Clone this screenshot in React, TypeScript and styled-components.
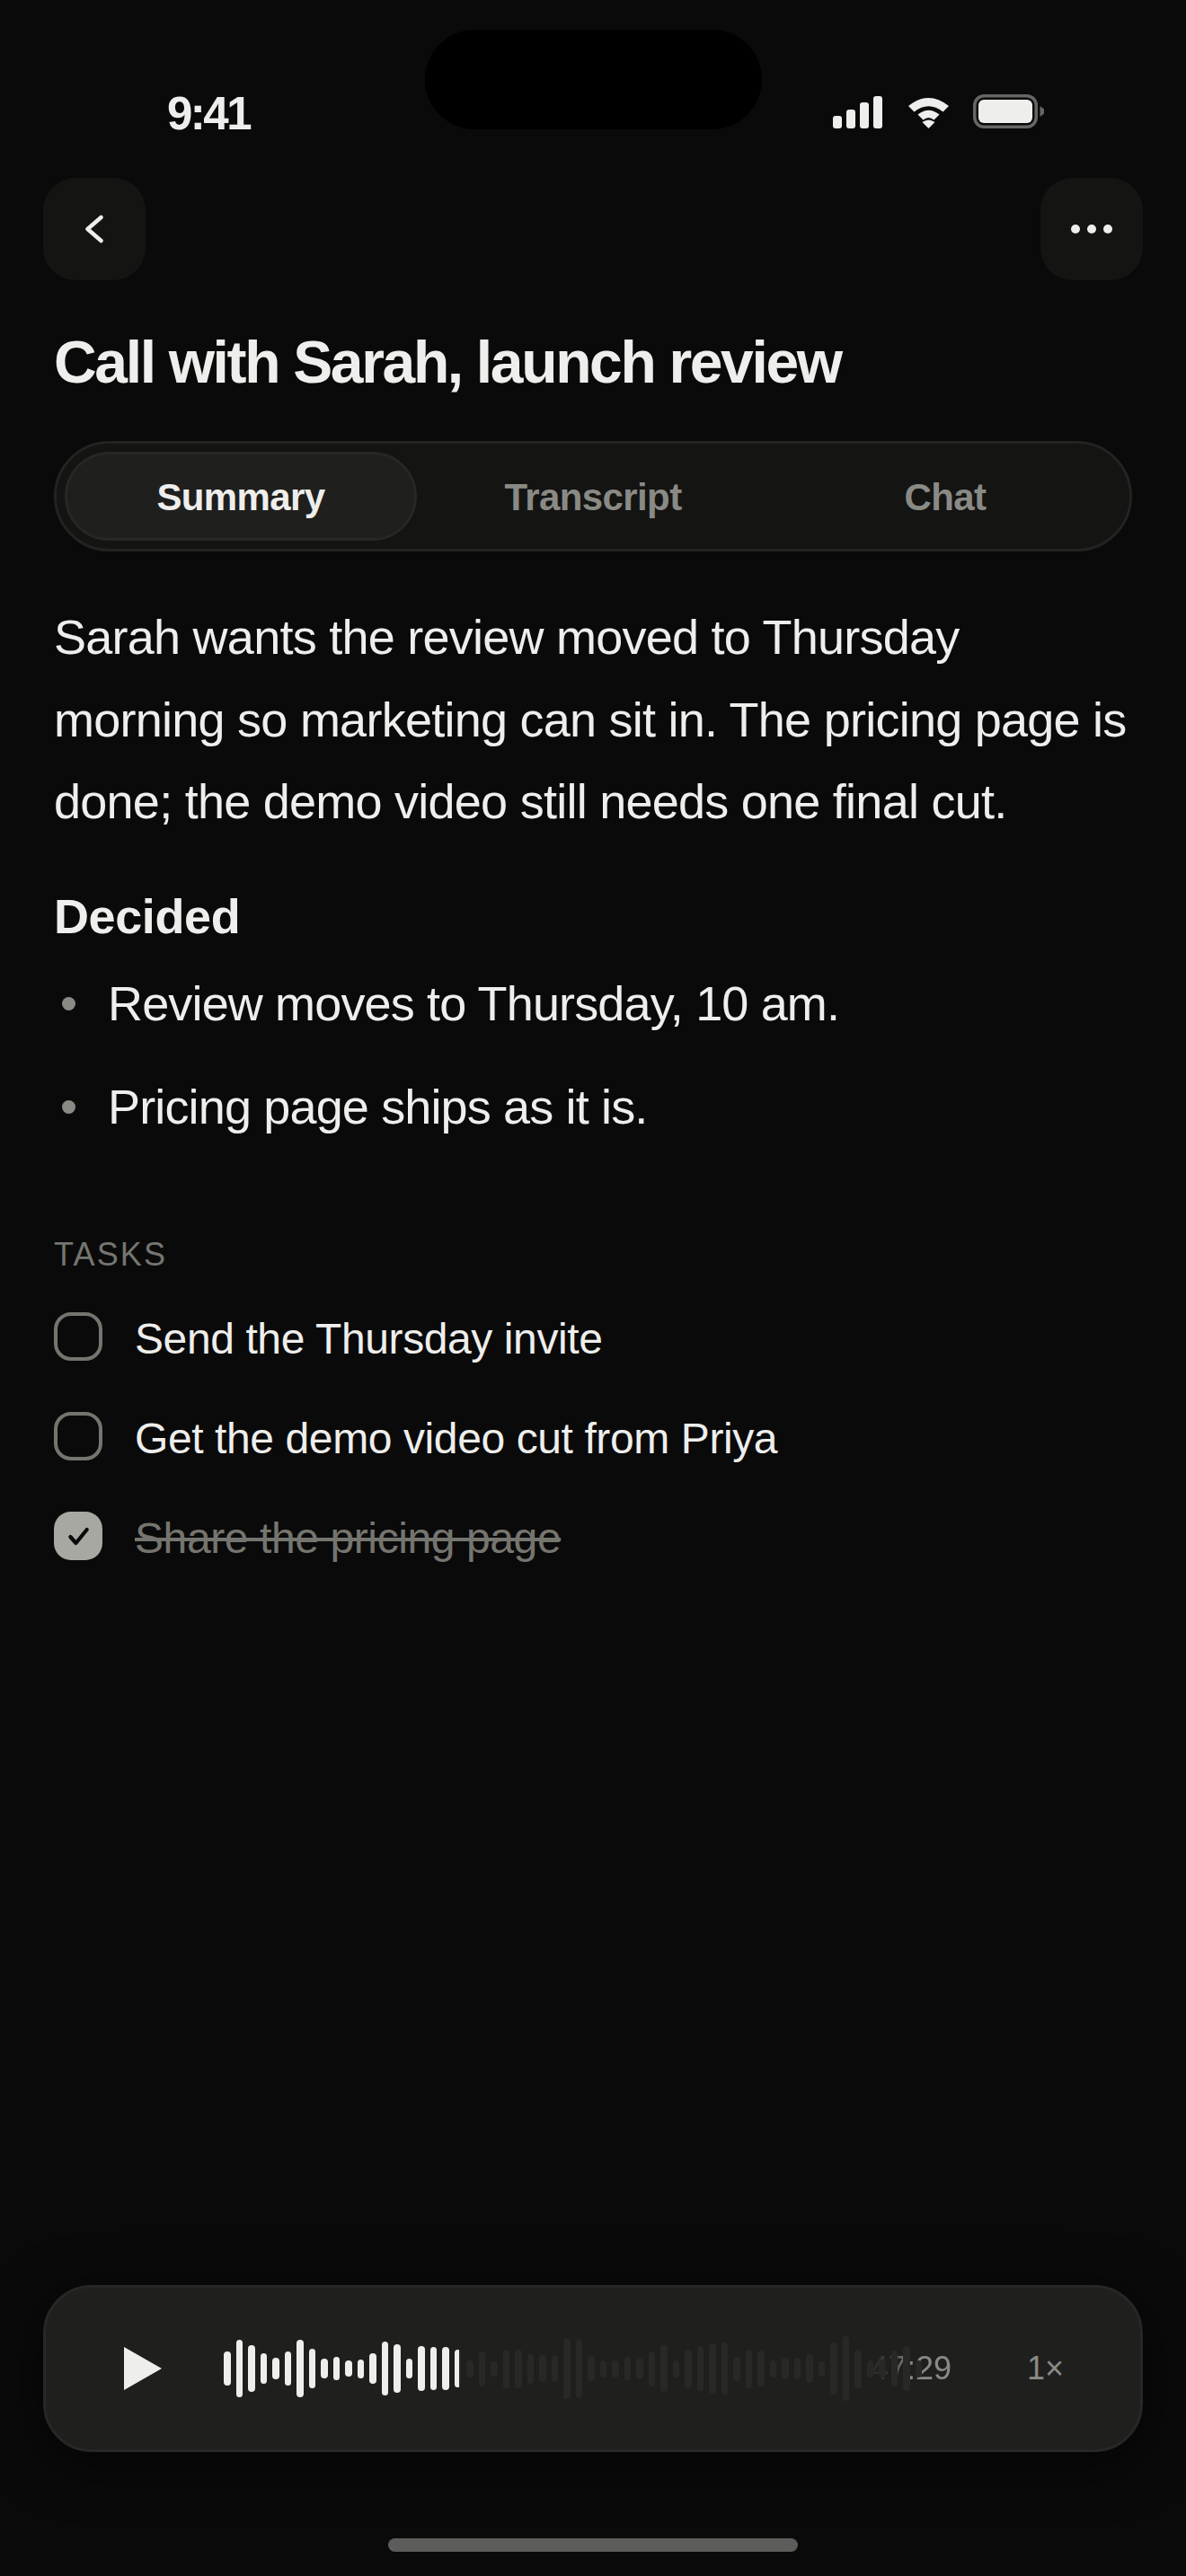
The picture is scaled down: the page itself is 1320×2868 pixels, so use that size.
import styled, { createGlobalStyle } from "styled-components";

const GlobalStyle = createGlobalStyle`
  html, body {
    margin: 0;
    background: #0a0a0a;
  }
  * {
    box-sizing: border-box;
  }
`;

const tabs = ["Summary", "Transcript", "Chat"];
const decisions = ["Review moves to Thursday, 10 am.", "Pricing page ships as it is."];
const tasks = [
  { label: "Send the Thursday invite", done: false },
  { label: "Get the demo video cut from Priya", done: false },
  { label: "Share the pricing page", done: true },
];
const bars = [
  38, 64, 52, 34, 24, 38, 64, 44, 22, 26, 18, 21, 34, 60, 54, 22, 50, 48, 48, 42, 19, 39, 17, 43, 43, 33, 30, 30, 68, 66,
  28, 19, 19, 27, 23, 39, 52, 19, 43, 50, 56, 58, 27, 43, 40, 19, 24, 24, 32, 17, 58, 72, 43, 19, 20, 40, 50, 19,
];

const App = () => {
  return (
    <Page>
      <GlobalStyle />
      <StatusBar>
        <Clock>9:41</Clock>
        <Island />
        <StatusIcons>
          <svg width="55" height="36" viewBox="0 0 55 36">
            <rect x="0" y="22" width="10" height="14" rx="3" fill="#eeeeec" />
            <rect x="15" y="15" width="10" height="21" rx="3" fill="#eeeeec" />
            <rect x="30" y="7" width="10" height="29" rx="3" fill="#eeeeec" />
            <rect x="45" y="0" width="10" height="36" rx="3" fill="#eeeeec" />
          </svg>
          <svg width="45" height="34" viewBox="0 0 45 34">
            <path d="M0 9 Q22.5 -9 45 9 L38.5 15.5 Q22.5 3 6.5 15.5 Z" fill="#eeeeec" />
            <path d="M10.5 18.5 Q22.5 9 34.5 18.5 L28.5 24.5 Q22.5 19.5 16.5 24.5 Z" fill="#eeeeec" />
            <path d="M15.5 27 Q22.5 22 29.5 27 L22.5 34 Z" fill="#eeeeec" />
          </svg>
          <svg width="79" height="38" viewBox="0 0 79 38">
            <rect x="1.75" y="1.75" width="68.5" height="34.5" rx="10.5" fill="none" stroke="#666664" strokeWidth="3.5" />
            <rect x="6" y="6" width="60" height="26" rx="6" fill="#eeeeec" />
            <path d="M74.5 13 L79 16.5 V21.5 L74.5 25 Z" fill="#666664" />
          </svg>
        </StatusIcons>
      </StatusBar>

      <NavRow>
        <IconButton aria-label="Back">
          <svg width="24" height="36" viewBox="0 0 24 36">
            <path d="M19.5 5 L4.5 18 L19.5 31" fill="none" stroke="#eeeeec" strokeWidth="4.5" strokeLinecap="round" strokeLinejoin="round" />
          </svg>
        </IconButton>
        <IconButton aria-label="More">
          <svg width="46" height="10" viewBox="0 0 46 10">
            <circle cx="5" cy="5" r="5" fill="#eeeeec" />
            <circle cx="23" cy="5" r="5" fill="#eeeeec" />
            <circle cx="41" cy="5" r="5" fill="#eeeeec" />
          </svg>
        </IconButton>
      </NavRow>

      <Title>Call with Sarah, launch review</Title>

      <Segment>
        {tabs.map((tab, i) => (
          <Tab key={tab} $active={i === 0}>
            {tab}
          </Tab>
        ))}
      </Segment>

      <Summary>
        Sarah wants the review moved to Thursday morning so marketing can sit in. The pricing page is done; the demo video still needs one final cut.
      </Summary>

      <Heading>Decided</Heading>
      <BulletList>
        {decisions.map((item) => (
          <Bullet key={item}>{item}</Bullet>
        ))}
      </BulletList>

      <SectionLabel>TASKS</SectionLabel>
      <TaskList>
        {tasks.map((task) => (
          <Task key={task.label}>
            <CheckBox $done={task.done}>
              {task.done && (
                <svg width="30" height="24" viewBox="0 0 30 24">
                  <path d="M6.3 13 L12.5 20 L24.7 5" fill="none" stroke="#0a0a0a" strokeWidth="4.2" strokeLinecap="round" strokeLinejoin="round" />
                </svg>
              )}
            </CheckBox>
            <TaskLabel $done={task.done}>{task.label}</TaskLabel>
          </Task>
        ))}
      </TaskList>

      <Player>
        <PlayIcon width="42" height="48" viewBox="0 0 42 48">
          <path d="M0 0 L42 24 L0 48 Z" fill="#eeeeec" />
        </PlayIcon>
        <Wave>
          <BarRow>
            {bars.map((h, i) => (
              <DimBar key={i} $h={h} />
            ))}
          </BarRow>
          <PlayedClip>
            <BarRow>
              {bars.map((h, i) => (
                <PlayedBar key={i} $h={h} />
              ))}
            </BarRow>
          </PlayedClip>
        </Wave>
        <Time>47:29</Time>
        <Speed>1×</Speed>
      </Player>

      <HomeIndicator />
    </Page>
  );
};

const Page = styled.div`
  width: 1320px;
  height: 2868px;
  display: flex;
  flex-direction: column;
  overflow: hidden;
  padding: 0 60px 27px;
  background: #0a0a0a;
  color: #eeeeec;
  font-family: "Liberation Sans", Arial, sans-serif;
`;
const StatusBar = styled.div`
  position: relative;
  height: 152px;
  flex: none;
  display: flex;
  align-items: flex-end;
  justify-content: space-between;
  padding: 0 98px 0 126px;
`;
const Clock = styled.div`
  font-size: 51px;
  line-height: 1;
  font-weight: 700;
  letter-spacing: -2.5px;
`;
const Island = styled.div`
  position: absolute;
  top: 33px;
  left: 412.5px;
  width: 375px;
  height: 111px;
  border-radius: 56px;
  background: #000;
`;
const StatusIcons = styled.div`
  display: flex;
  align-items: flex-end;
  gap: 29px;
  padding-bottom: 9px;
  svg:last-child {
    margin-left: -2px;
  }
`;
const NavRow = styled.div`
  display: flex;
  justify-content: space-between;
  margin: 46px -12px 0;
`;
const IconButton = styled.button`
  width: 114px;
  height: 114px;
  padding: 0;
  border: 0;
  border-radius: 36px;
  background: #141413;
  display: flex;
  align-items: center;
  justify-content: center;
`;
const Title = styled.h1`
  margin: 52px 0 0;
  font-size: 66px;
  line-height: 79px;
  font-weight: 700;
  letter-spacing: -2.35px;
`;
const Segment = styled.div`
  margin-top: 48px;
  height: 123px;
  flex: none;
  display: grid;
  grid-template-columns: repeat(3, 1fr);
  padding: 9px;
  border: 3px solid #232322;
  border-radius: 62px;
  background: #141413;
`;
const Tab = styled.div<{ $active: boolean }>`
  display: flex;
  align-items: center;
  justify-content: center;
  padding-top: 2px;
  border-radius: 50px;
  border: 3px solid ${(p) => (p.$active ? "#272726" : "transparent")};
  background: ${(p) => (p.$active ? "#1f1f1e" : "transparent")};
  color: ${(p) => (p.$active ? "#eeeeec" : "#8a8a85")};
  font-size: 42px;
  font-weight: 700;
  letter-spacing: -0.6px;
`;
const Summary = styled.p`
  margin: 50px 0 0;
  font-size: 54px;
  line-height: 91.5px;
  letter-spacing: -0.75px;
`;
const Heading = styled.h2`
  margin: 49px 0 0;
  font-size: 54px;
  line-height: 65px;
  font-weight: 700;
  letter-spacing: -0.4px;
`;
const BulletList = styled.ul`
  list-style: none;
  margin: 18px 0 0;
  padding: 0;
  display: flex;
  flex-direction: column;
  gap: 23px;
`;
const Bullet = styled.li`
  position: relative;
  padding-left: 60px;
  font-size: 54px;
  line-height: 92px;
  letter-spacing: -0.85px;
  &::before {
    content: "";
    position: absolute;
    left: 9px;
    top: 39px;
    width: 15px;
    height: 15px;
    border-radius: 50%;
    background: #8a8a85;
  }
`;
const SectionLabel = styled.div`
  margin-top: 97px;
  font-size: 36px;
  line-height: 43px;
  letter-spacing: 2.16px;
  color: #75756f;
`;
const TaskList = styled.div`
  margin-top: 43px;
  display: flex;
  flex-direction: column;
  gap: 57px;
`;
const Task = styled.div`
  display: flex;
  align-items: center;
  gap: 36px;
  height: 54px;
`;
const CheckBox = styled.div<{ $done: boolean }>`
  width: 54px;
  height: 54px;
  flex: none;
  display: flex;
  align-items: center;
  justify-content: center;
  border-radius: 19px;
  border: ${(p) => (p.$done ? "0" : "4px solid #75756f")};
  background: ${(p) => (p.$done ? "#a8a8a3" : "transparent")};
`;
const TaskLabel = styled.span<{ $done: boolean }>`
  padding-top: 6px;
  font-size: 48px;
  line-height: 54px;
  letter-spacing: -0.4px;
  color: ${(p) => (p.$done ? "#75756f" : "#eeeeec")};
  text-decoration: ${(p) => (p.$done ? "line-through" : "none")};
`;
const Player = styled.div`
  margin: auto -12px 96px;
  height: 186px;
  flex: none;
  display: flex;
  align-items: center;
  padding: 0 85px 0 87px;
  border: 3px solid #272726;
  border-radius: 54px;
  background: #1f1f1e;
  box-shadow: 0 12px 60px rgba(0, 0, 0, 0.55);
`;
const PlayIcon = styled.svg`
  flex: none;
`;
const Wave = styled.div`
  position: relative;
  z-index: 1;
  flex: 1;
  min-width: 0;
  height: 72px;
  margin-left: 69px;
`;
const BarRow = styled.div`
  display: flex;
  align-items: center;
  gap: 6px;
  height: 72px;
  width: max-content;
`;
const DimBar = styled.i<{ $h: number }>`
  display: block;
  flex: none;
  width: 7.5px;
  height: ${(p) => p.$h}px;
  border-radius: 4px;
  background: #282826;
`;
const PlayedClip = styled.div`
  position: absolute;
  top: 0;
  left: 0;
  width: 262px;
  height: 72px;
  overflow: hidden;
  background: #1f1f1e;
`;
const PlayedBar = styled(DimBar)`
  background: #eeeeec;
`;
const Time = styled.div`
  flex: none;
  font-size: 36px;
  color: #8a8a85;
  mask-image: linear-gradient(90deg, rgba(0, 0, 0, 0.1) 0, rgba(0, 0, 0, 0.3) 25%, #000 48%);
`;
const Speed = styled.div`
  flex: none;
  margin-left: 84px;
  font-size: 36px;
  color: #8a8a85;
`;
const HomeIndicator = styled.div`
  flex: none;
  align-self: center;
  width: 456px;
  height: 15px;
  border-radius: 8px;
  background: #5c5c5a;
`;

export default App;
